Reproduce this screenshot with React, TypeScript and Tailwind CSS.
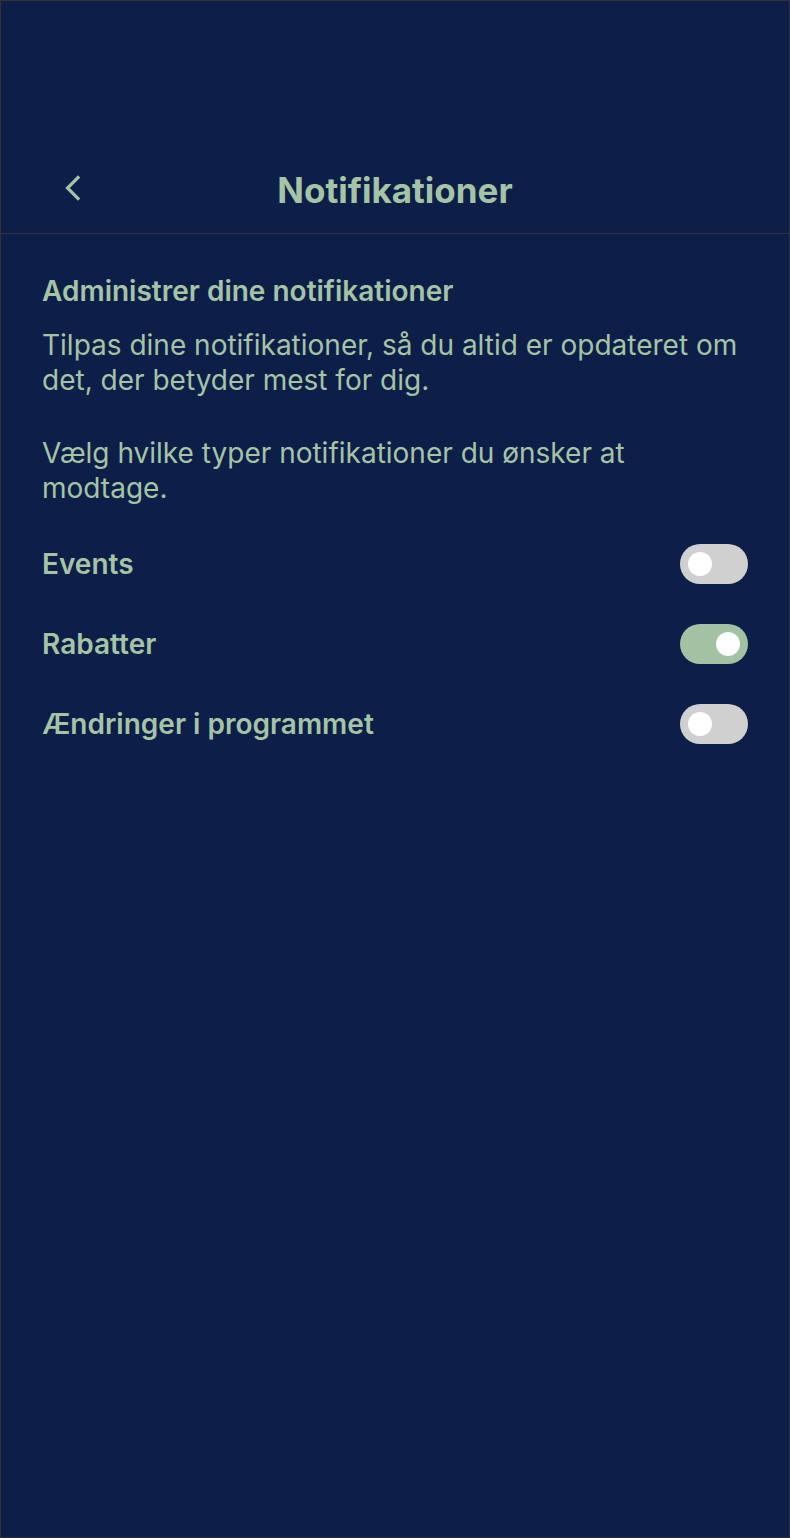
import { useState } from "react";

function Toggle({ on, onChange }: { on: boolean; onChange: (v: boolean) => void }) {
  return (
    <button
      type="button"
      role="switch"
      aria-checked={on}
      onClick={() => onChange(!on)}
      className={`flex h-[40px] w-[68px] shrink-0 items-center rounded-full px-[8px] ${
        on ? "justify-end bg-[#a3c2a3]" : "justify-start bg-[#d0d0d0]"
      }`}
    >
      <span className="h-[24px] w-[24px] rounded-full bg-white" />
    </button>
  );
}

const rowsInit = [
  { id: "events", label: "Events", on: false },
  { id: "rabatter", label: "Rabatter", on: true },
  { id: "programmet", label: "Ændringer i programmet", on: false },
];

export default function App() {
  const [rows, setRows] = useState(rowsInit);

  const toggle = (id: string, value: boolean) => {
    setRows((prev) => prev.map((r) => (r.id === id ? { ...r, on: value } : r)));
  };

  return (
    <div className="flex min-h-[1538px] flex-col border border-[#333333] bg-[#0d1f48] font-['Inter',sans-serif] text-[#a5c3a5]">
      <header className="relative mt-[149px] flex h-[84px] items-center justify-center border-b border-[#333333]">
        <button type="button" aria-label="Tilbage" className="absolute left-[58px] top-[24px]">
          <svg width="26" height="28" viewBox="0 0 26 28" fill="none">
            <path d="M19 3.5 L8.5 14 L19 24.5" stroke="#a5c3a5" strokeWidth="3.2" strokeLinecap="square" strokeLinejoin="miter" />
          </svg>
        </button>
        <h1 className="mt-[-3px] text-[35px] font-bold">Notifikationer</h1>
      </header>

      <main className="flex flex-col px-[41px] pt-[40px]">
        <h2 className="text-[28px] font-semibold leading-[34px]">Administrer dine notifikationer</h2>
        <p className="mt-[20px] text-[28px] leading-[35px]">
          Tilpas dine notifikationer, så du altid er opdateret om det, der betyder mest for dig.
        </p>
        <p className="mt-[38px] text-[28px] leading-[35px]">
          Vælg hvilke typer notifikationer du ønsker at modtage.
        </p>

        <div className="mt-[38px] flex flex-col gap-[40px]">
          {rows.map((row) => (
            <div key={row.id} className="flex h-[40px] items-center justify-between">
              <span className="text-[28px] font-semibold">{row.label}</span>
              <Toggle on={row.on} onChange={(v) => toggle(row.id, v)} />
            </div>
          ))}
        </div>
      </main>
    </div>
  );
}
